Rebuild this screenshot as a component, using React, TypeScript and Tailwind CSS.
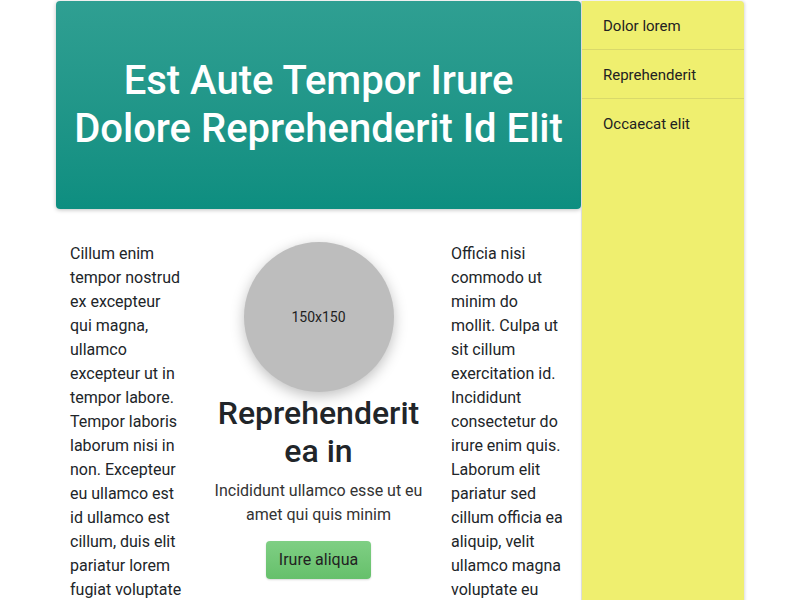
const menu = ['Dolor lorem', 'Reprehenderit', 'Occaecat elit'];

export default function App() {
  return (
    <div className="min-h-[600px] bg-white text-[#212529] font-['Roboto',sans-serif]">
      <div className="mx-auto flex w-[688px] items-stretch pt-px">
        <main className="w-[525px] shrink-0">
          <header className="flex h-[208px] items-center justify-center rounded-[4px] bg-gradient-to-b from-[#2f9f92] to-[#0d8e80] px-2 shadow-[0_1px_4px_rgba(0,0,0,0.25)]">
            <h1 className="text-center text-[40px] font-medium leading-[1.2] text-white">
              Est Aute Tempor Irure
              <br />
              Dolore Reprehenderit Id Elit
            </h1>
          </header>

          <div className="grid grid-cols-[116px_1fr_112px] gap-4 pl-[14px] pr-[18px] pt-[33px]">
            <p className="text-base leading-6">
              Cillum enim tempor nostrud ex excepteur qui magna, ullamco excepteur ut in tempor labore.
              Tempor laboris laborum nisi in non. Excepteur eu ullamco est id ullamco est cillum, duis
              elit pariatur lorem fugiat voluptate esse. Aliqua ut sint velit.
            </p>

            <div className="flex flex-col items-center text-center">
              <div className="flex h-[150px] w-[150px] items-center justify-center rounded-full bg-[#bdbdbd] text-sm text-[#1f1f1f] shadow-[0_4px_14px_rgba(0,0,0,0.25)]">
                150x150
              </div>
              <h2 className="mt-0.5 mb-2 text-[32px] font-medium leading-[1.2] text-[#212529]">
                Reprehenderit ea in
              </h2>
              <p className="mb-[14px] text-base leading-6 text-[#333]">
                Incididunt ullamco esse ut eu amet qui quis minim
              </p>
              <button className="h-[38px] rounded-[4px] bg-gradient-to-b from-[#7fcf84] to-[#66c06b] px-[13px] text-base text-[#222] shadow-[0_1px_2px_rgba(0,0,0,0.15)]">
                Irure aliqua
              </button>
            </div>

            <p className="text-base leading-6">
              Officia nisi commodo ut minim do mollit. Culpa ut sit cillum exercitation id. Incididunt
              consectetur do irure enim quis. Laborum elit pariatur sed cillum officia ea aliquip, velit
              ullamco magna voluptate eu fugiat nulla.
            </p>
          </div>
        </main>

        <aside className="min-h-[599px] flex-1 rounded-tr-[4px] border-l border-[#dcdcdc] bg-[#efef6f] shadow-[1px_0_3px_rgba(0,0,0,0.15)]">
          {menu.map((item, i) => (
            <div
              key={item}
              className={`pl-[21px] pr-4 pt-[13px] pb-[11px] text-[15px] leading-6 text-[#222] ${i < menu.length - 1 ? 'border-b border-[#d9d96a]' : ''}`}
            >
              {item}
            </div>
          ))}
        </aside>
      </div>
    </div>
  );
}
